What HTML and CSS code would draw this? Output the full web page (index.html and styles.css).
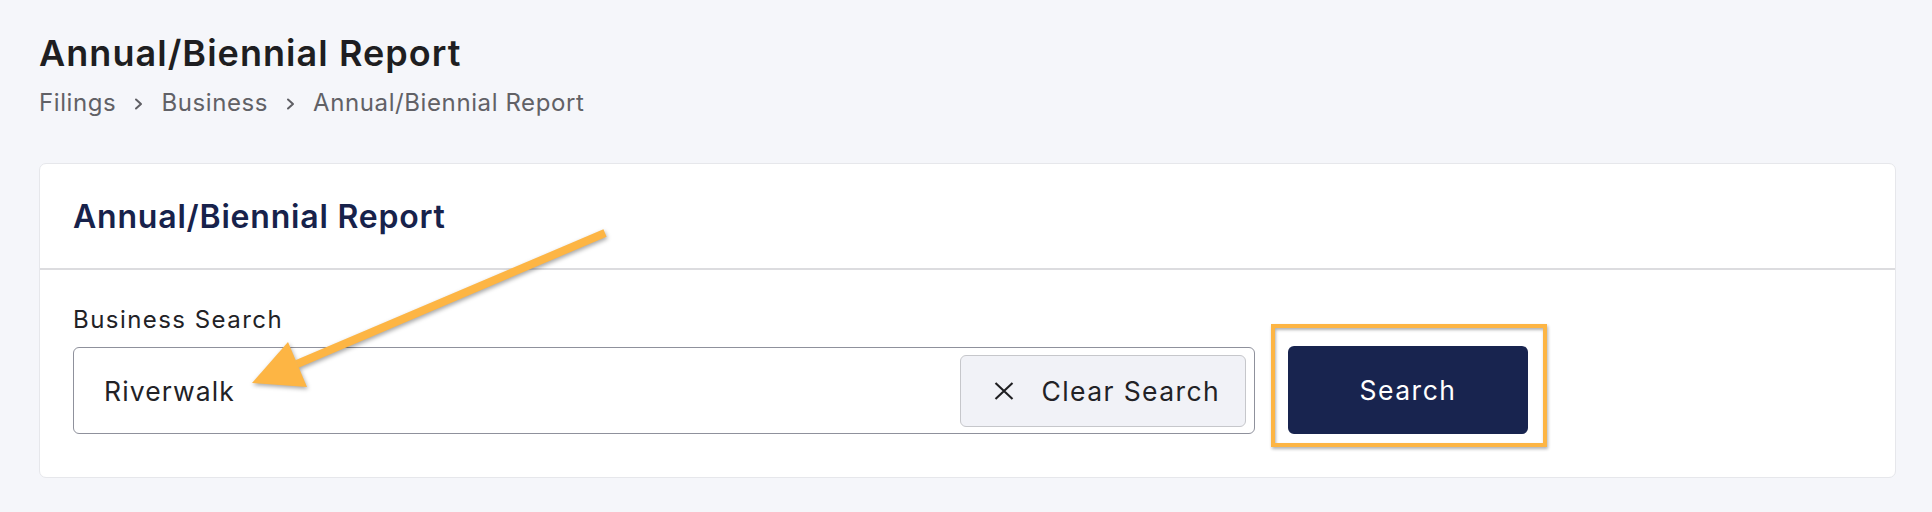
FILE: index.html
```html
<!DOCTYPE html>
<html lang="en">
<head>
<meta charset="utf-8">
<title>Annual/Biennial Report</title>
<link rel="stylesheet" href="styles.css">
</head>
<body>
<div class="page">
  <h1 class="page-title">Annual/Biennial Report</h1>
  <nav class="breadcrumb">
    <span class="crumb">Filings</span>
    <svg class="crumb-sep" width="9" height="12" viewBox="0 0 9 12"><path d="M2 1.5 L7 6 L2 10.5" fill="none" stroke="#5f5f64" stroke-width="2" stroke-linecap="round" stroke-linejoin="round"/></svg>
    <span class="crumb">Business</span>
    <svg class="crumb-sep" width="9" height="12" viewBox="0 0 9 12"><path d="M2 1.5 L7 6 L2 10.5" fill="none" stroke="#5f5f64" stroke-width="2" stroke-linecap="round" stroke-linejoin="round"/></svg>
    <span class="crumb">Annual/Biennial Report</span>
  </nav>
  <section class="card">
    <header class="card-header"><h2 class="card-title">Annual/Biennial Report</h2></header>
    <div class="card-body">
      <label class="field-label">Business Search</label>
      <div class="search-row">
        <div class="search-input">
          <span class="input-value">Riverwalk</span>
          <button class="clear-btn" type="button">
            <svg class="clear-icon" width="20" height="18" viewBox="0 0 20 18"><path d="M1.5 1 L18.5 17 M18.5 1 L1.5 17" stroke="#1f1f22" stroke-width="2.1"/></svg>
            <span class="clear-text">Clear Search</span>
          </button>
        </div>
        <div class="search-btn-wrap">
          <button class="search-btn" type="button">Search</button>
          <span class="highlight-box"></span>
        </div>
      </div>
    </div>
  </section>
</div>
<svg class="arrow-annotation" width="1932" height="512" viewBox="0 0 1932 512">
  <line x1="605" y1="233" x2="297" y2="364" stroke="#fdb544" stroke-width="8"/>
  <polygon points="252,383 288,342 307,387" fill="#fdb544"/>
</svg>
</body>
</html>
```
FILE: styles.css
```css
* { box-sizing: border-box; }

html, body {
  margin: 0;
  padding: 0;
}

body {
  width: 1932px;
  height: 512px;
  overflow: hidden;
  position: relative;
  background: #f5f6fa;
  font-family: Inter, "Noto Sans", sans-serif;
  color: #1f1f22;
}

.page {
  padding: 0 36px 0 39px;
}

.page-title {
  margin: 0;
  padding-top: 31px;
  font-size: 36px;
  line-height: 44px;
  font-weight: 600;
  letter-spacing: 1.05px;
  color: #1e1e21;
}

.breadcrumb {
  margin-top: 13px;
  display: flex;
  align-items: center;
  gap: 18px;
  font-size: 24px;
  line-height: 30px;
  letter-spacing: 0.6px;
  color: #616166;
}

.crumb-sep {
  flex: none;
  margin-top: 1px;
}

.card {
  margin-top: 45px;
  background: #ffffff;
  border: 1px solid #e6e7eb;
  border-radius: 7px;
}

.card-header {
  height: 106px;
  padding: 33px 33px 0;
  border-bottom: 2px solid #dcdcdf;
}

.card-title {
  margin: 0;
  font-size: 32px;
  line-height: 40px;
  font-weight: 600;
  letter-spacing: 0.8px;
  color: #17224b;
}

.card-body {
  padding: 35px 33px 43px;
}

.field-label {
  display: block;
  font-size: 24px;
  line-height: 30px;
  letter-spacing: 1.45px;
  color: #222226;
}

.search-row {
  margin-top: 12px;
  display: flex;
  align-items: flex-start;
  gap: 33px;
}

.search-input {
  width: 1182px;
  height: 87px;
  display: flex;
  align-items: center;
  justify-content: space-between;
  padding: 0 8px 0 30px;
  border: 1.5px solid #8f919c;
  border-radius: 6px;
  background: #ffffff;
}

.input-value {
  font-size: 26.5px;
  letter-spacing: 1.1px;
  color: #222226;
}

.clear-btn {
  width: 286px;
  height: 72px;
  display: flex;
  align-items: center;
  gap: 28px;
  padding: 0 0 0 32.5px;
  background: #f1f2f7;
  border: 1.5px solid #c6c7cb;
  border-radius: 6px;
  font-family: inherit;
  font-size: 26.5px;
  letter-spacing: 1.4px;
  color: #222226;
}

.clear-icon {
  flex: none;
}

.search-btn-wrap {
  position: relative;
}

.search-btn {
  width: 240px;
  height: 88px;
  margin-top: -1px;
  background: #18244f;
  border: none;
  border-radius: 6px;
  color: #ffffff;
  font-family: inherit;
  font-size: 26.5px;
  letter-spacing: 1.5px;
}

.highlight-box {
  position: absolute;
  left: -17px;
  top: -23px;
  width: 276px;
  height: 123px;
  border: 4px solid #fdb544;
  box-shadow: 1px 2px 3px rgba(0, 0, 0, 0.3), inset 1px 2px 3px rgba(0, 0, 0, 0.3);
  pointer-events: none;
}

.arrow-annotation {
  position: absolute;
  left: 0;
  top: 0;
  pointer-events: none;
  filter: drop-shadow(1px 2px 2px rgba(0, 0, 0, 0.35));
}
```
